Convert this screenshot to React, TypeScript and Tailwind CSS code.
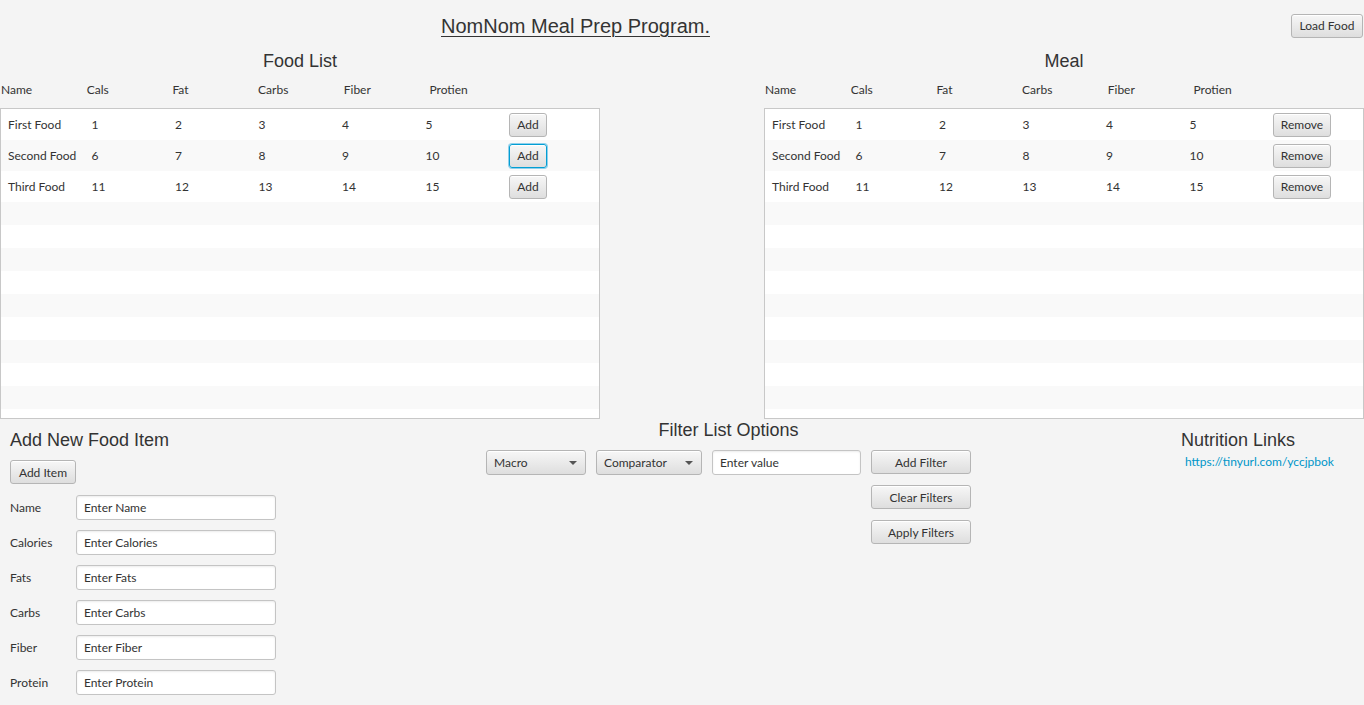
import React from 'react';

type Food = { name: string; cals: number; fat: number; carbs: number; fiber: number; protein: number };

const foods: Food[] = [
    { name: 'First Food', cals: 1, fat: 2, carbs: 3, fiber: 4, protein: 5 },
    { name: 'Second Food', cals: 6, fat: 7, carbs: 8, fiber: 9, protein: 10 },
    { name: 'Third Food', cals: 11, fat: 12, carbs: 13, fiber: 14, protein: 15 },
];

const headers = ['Name', 'Cals', 'Fat', 'Carbs', 'Fiber', 'Protien'];

const FxButton = ({ children, className = '', focused = false }: { children: React.ReactNode; className?: string; focused?: boolean }) => (
    <button
        type="button"
        className={`h-[24px] rounded-[3px] border bg-linear-to-b from-[#f7f7f7] to-[#dedede] text-[12px] leading-none text-[#333] shadow-[inset_0_1px_0_#ffffff] ${focused ? 'border-[#039ed3] ring-1 ring-[#8fd0ec]' : 'border-[#b5b5b5]'} ${className}`}
    >
        {children}
    </button>
);

const FxCombo = ({ label, width }: { label: string; width: string }) => (
    <div className={`flex h-[25px] items-center justify-between rounded-[3px] border border-[#b5b5b5] bg-linear-to-b from-[#f7f7f7] to-[#dedede] pl-[7px] pr-[8px] text-[12px] text-[#333] shadow-[inset_0_1px_0_#ffffff] ${width}`}>
        <span>{label}</span>
        <span className="h-0 w-0 border-x-[4px] border-t-[4px] border-x-transparent border-t-[#555]" />
    </div>
);

const FxInput = ({ placeholder, className = '' }: { placeholder: string; className?: string }) => (
    <input
        placeholder={placeholder}
        className={`h-[25px] rounded-[3px] border border-[#c4c4c4] bg-white px-[7px] text-[12px] text-[#333] shadow-[inset_0_1px_2px_rgba(0,0,0,0.08)] outline-none placeholder:text-[#333] ${className}`}
    />
);

const FoodTable = ({ title, action, actionWidth }: { title: string; action: string; actionWidth: string }) => (
    <div className="w-[600px]">
        <h2 className="h-[22px] text-center font-['Liberation_Sans',Arial,sans-serif] text-[18px] leading-[22px] text-[#333]">{title}</h2>
        <div className="grid h-[36px] grid-cols-[repeat(6,85.7px)] items-center text-[12px] text-[#333]">
            {headers.map(h => <span key={h} className="pl-[1px]">{h}</span>)}
        </div>
        <div className="h-[311px] overflow-hidden border border-[#c8c8c8] bg-white">
            {foods.map((f, i) => (
                <div key={f.name} className={`grid h-[31px] grid-cols-[repeat(7,83.5px)] items-center text-[12px] text-[#333] ${i % 2 === 1 ? 'bg-[#f9f9f9]' : 'bg-white'}`}>
                    <span className="pl-[7px] whitespace-nowrap">{f.name}</span>
                    <span className="pl-[7px]">{f.cals}</span>
                    <span className="pl-[7px]">{f.fat}</span>
                    <span className="pl-[7px]">{f.carbs}</span>
                    <span className="pl-[7px]">{f.fiber}</span>
                    <span className="pl-[7px]">{f.protein}</span>
                    <span className="pl-[7px]">
                        <FxButton className={actionWidth} focused={action === 'Add' && i === 1}>{action}</FxButton>
                    </span>
                </div>
            ))}
            {Array.from({ length: 10 }).map((_, i) => (
                <div key={i} className={`h-[23px] ${i % 2 === 0 ? 'bg-[#f9f9f9]' : 'bg-white'}`} />
            ))}
        </div>
    </div>
);

const formFields = [
    { label: 'Name', placeholder: 'Enter Name' },
    { label: 'Calories', placeholder: 'Enter Calories' },
    { label: 'Fats', placeholder: 'Enter Fats' },
    { label: 'Carbs', placeholder: 'Enter Carbs' },
    { label: 'Fiber', placeholder: 'Enter Fiber' },
    { label: 'Protein', placeholder: 'Enter Protein' },
];

const App: React.FC = () => {
    return (
        <div className="h-[705px] w-[1364px] overflow-hidden bg-[#f4f4f4] font-['Lato','Open_Sans',sans-serif] text-[#333]">
            <div className="flex h-[50px] items-start pt-[14px]">
                <h1 className="ml-[441px] font-['Liberation_Sans',Arial,sans-serif] text-[20px] leading-[24px] text-[#333] underline decoration-1 underline-offset-[3px]">
                    NomNom Meal Prep Program.
                </h1>
                <FxButton className="ml-auto mr-[1px] w-[72px]">Load Food</FxButton>
            </div>

            <div className="flex justify-between">
                <FoodTable title="Food List" action="Add" actionWidth="w-[38px]" />
                <FoodTable title="Meal" action="Remove" actionWidth="w-[58px]" />
            </div>

            <div className="flex">
                <div className="w-[486px] pl-[10px] pt-[10px]">
                    <h2 className="h-[22px] font-['Liberation_Sans',Arial,sans-serif] text-[18px] leading-[22px]">Add New Food Item</h2>
                    <FxButton className="mt-[9px] w-[66px] pt-[1px]">Add Item</FxButton>
                    <div className="mt-[11px] flex flex-col gap-[10px]">
                        {formFields.map(f => (
                            <div key={f.label} className="flex items-center">
                                <span className="w-[66px] text-[12px]">{f.label}</span>
                                <FxInput placeholder={f.placeholder} className="w-[200px]" />
                            </div>
                        ))}
                    </div>
                </div>

                <div className="w-[485px]">
                    <h2 className="h-[22px] text-center font-['Liberation_Sans',Arial,sans-serif] text-[18px] leading-[22px]">Filter List Options</h2>
                    <div className="mt-[9px] flex items-start gap-[10px]">
                        <FxCombo label="Macro" width="w-[100px]" />
                        <FxCombo label="Comparator" width="w-[106px]" />
                        <FxInput placeholder="Enter value" className="w-[149px]" />
                        <div className="flex flex-col gap-[11px]">
                            <FxButton className="w-[100px] pt-[1px]">Add Filter</FxButton>
                            <FxButton className="w-[100px] pt-[1px]">Clear Filters</FxButton>
                            <FxButton className="w-[100px] pt-[1px]">Apply Filters</FxButton>
                        </div>
                    </div>
                </div>

                <div className="ml-[210px] pt-[10px]">
                    <h2 className="h-[22px] font-['Liberation_Sans',Arial,sans-serif] text-[18px] leading-[22px]">Nutrition Links</h2>
                    <a className="mt-[3px] block pl-[4px] text-[12px] leading-[16px] text-[#0096c9]" href="#">
                        https://tinyurl.com/yccjpbok
                    </a>
                </div>
            </div>
        </div>
    );
};

export default App;
